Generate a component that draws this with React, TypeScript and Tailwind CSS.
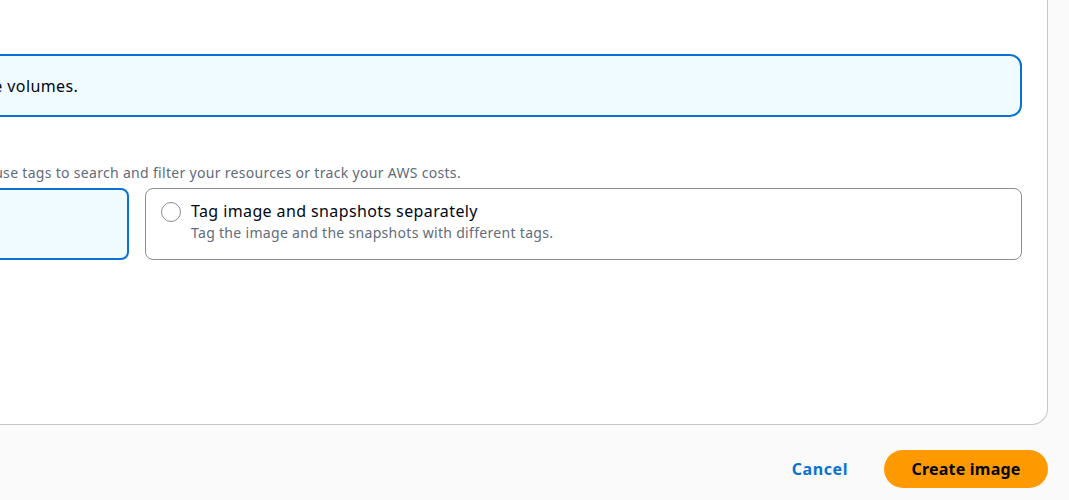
function Radio({ checked }: { checked: boolean }) {
  return checked ? (
    <span className="mt-[2px] box-border flex h-[20px] w-[20px] shrink-0 items-center justify-center rounded-full border-[6px] border-[#0972d3] bg-white" />
  ) : (
    <span className="mt-[2px] box-border block h-[20px] w-[20px] shrink-0 rounded-full border-[1.5px] border-[#8c8c94] bg-white" />
  );
}

function Tile({ checked, title, desc }: { checked: boolean; title: string; desc: string }) {
  return (
    <div
      className={
        checked
          ? "flex h-[72px] gap-[10px] rounded-[8px] border-2 border-[#0972d3] bg-[#f0fbff] px-[15px] pt-[10px]"
          : "flex h-[72px] gap-[10px] rounded-[8px] border border-[#8c8c94] bg-white px-[15px] pt-[11px]"
      }
    >
      <Radio checked={checked} />
      <div className="flex flex-col">
        <span className="text-[16px] leading-[23px] tracking-[0.39px] text-[#000716]">{title}</span>
        <span className="text-[14px] leading-[20px] tracking-[0.31px] text-[#5f6b7a]">{desc}</span>
      </div>
    </div>
  );
}

export default function App() {
  return (
    <div
      className="h-[500px] w-[1069px] overflow-hidden bg-[#fafafa]"
      style={{ fontFamily: '"Noto Sans", sans-serif' }}
    >
      <div className="ml-[-773px] w-[1842px]">
        <div className="box-border w-[1821px] rounded-br-[16px] border-r border-b border-[#c6c6cd] bg-white pl-[25px] pr-[25px] pt-[54px]">
          <div className="flex h-[63px] items-center gap-[8px] rounded-[12px] border-2 border-[#0972d3] bg-[#f0fbff] px-[16px]">
            <svg width="16" height="16" viewBox="0 0 16 16" fill="none" stroke="#0972d3" strokeWidth="2">
              <circle cx="8" cy="8" r="7" />
              <path d="M8 11V7M8 5V4.5" />
            </svg>
            <span className="ml-[12px] whitespace-nowrap text-[16px] leading-[24px] tracking-[0.39px] text-[#000716]">
              During the image creation process, Amazon EC2 creates a snapshot of each of the above volumes.
            </span>
          </div>
          <div className="mt-[22px] text-[14px] font-bold leading-[20px] text-[#000716]">Tags - optional</div>
          <div className="mt-[4px] ml-[-4px] whitespace-nowrap text-[14px] leading-[20px] tracking-[0.31px] text-[#5f6b7a]">
            A tag is a label that you assign to an AWS resource. Each tag consists of a key and an optional value. You can use tags to search and filter your resources or track your AWS costs.
          </div>
          <div className="mt-[5px] grid grid-cols-2 gap-4">
            <Tile checked title="Tag image and snapshots together" desc="Tag the image and the snapshots with the same tag." />
            <Tile checked={false} title="Tag image and snapshots separately" desc="Tag the image and the snapshots with different tags." />
          </div>
          <div className="h-[164px]" />
        </div>
        <div className="flex w-[1821px] items-center justify-end gap-[16px] pt-[25px]">
          <button className="px-[20px] text-[16px] font-bold leading-[38px] tracking-[0.6px] text-[#0972d3]">Cancel</button>
          <button className="h-[38px] rounded-full bg-[#ff9900] px-[27.5px] text-[16px] font-bold leading-[38px] tracking-[0.2px] text-[#000716]">
            Create image
          </button>
        </div>
      </div>
    </div>
  );
}
